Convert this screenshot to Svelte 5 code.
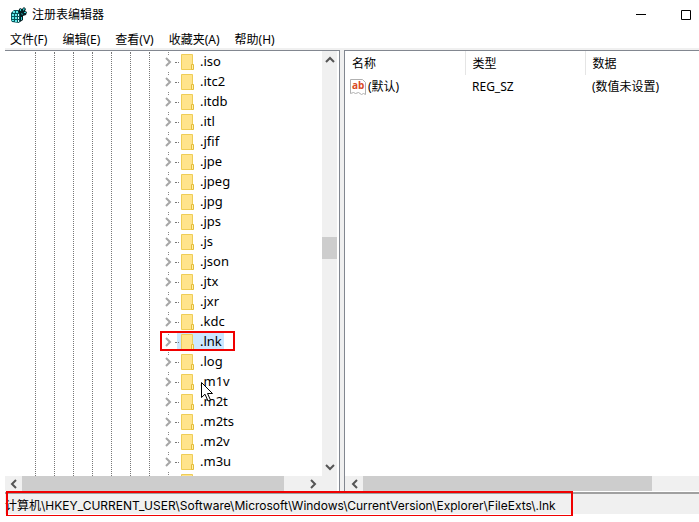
<script>
  const menus = ["文件(F)", "编辑(E)", "查看(V)", "收藏夹(A)", "帮助(H)"];

  const keys = [
    ".iso", ".itc2", ".itdb", ".itl", ".jfif", ".jpe", ".jpeg", ".jpg",
    ".jps", ".js", ".json", ".jtx", ".jxr", ".kdc", ".lnk", ".log",
    ".m1v", ".m2t", ".m2ts", ".m2v", ".m3u"
  ];

  // One guide for each ancestor level of the open branch
  const levels = [1, 2, 3, 4, 5, 6, 7];

  let selected = $state(".lnk");

  const arrows = {
    up: "M1 7 5 3 9 7",
    down: "M1 2 5 6 9 2",
    left: "M7 1 3 5 7 9",
    right: "M3 1 7 5 3 9"
  };
</script>

{#snippet arrow(dir, label)}
  <button class="arrow" aria-label={label}>
    <svg width="10" height="10" viewBox="0 0 10 10"><path d={arrows[dir]} /></svg>
  </button>
{/snippet}

{#snippet folder()}
  <svg width="13" height="16" viewBox="0 0 13 16">
    <path d="M.5.5h11v15H.5z" fill="#ffe48c" stroke="#efcd57" />
    <path d="M10.500 10.500h2v5h-2z" fill="#fff0ae" stroke="#e5bd39" />
  </svg>
{/snippet}

<div class="window">
  <header class="titlebar">
    <svg width="18" height="18" viewBox="0 0 18 18">
      <path d="M1 7 4 4 8 4 11 7 12 13 9 17 2 16 1 14z" fill="#075459" />
      <path d="M3 5h2v2H3zM6 5h2v2H6zM2 8h2v2H2zM5 8h2v2H5zM2 11h2v2H2zM5 11h2v2H5zM2 14h2v1H2zM5 14h2v2H5z" fill="#5fe8e8" />
      <path d="M8 8h1v2H8zM8 11h1v2H8zM8 14h1v2H8z" fill="#dffcfc" />
      <path d="M8 5 10 2 12 3 14 1 16 3 15 5 17 6 16 9 13 10 13 14 10 16 10 8z" fill="#031f22" />
      <path d="M10 3h1v2h-1zM13 3l1-1 1 1-2 2zM14 6h2v1h-2zM11 7l2 1-1 1zM11 11h1v3h-1z" fill="#38cdd0" />
    </svg>
    <h1>注册表编辑器</h1>
    <button class="caption" aria-label="最小化">
      <svg width="12" height="12" viewBox="0 0 12 12"><path d="M1 5.500h10" /></svg>
    </button>
    <button class="caption" aria-label="最大化">
      <svg width="12" height="12" viewBox="0 0 12 12"><path d="M1.500 1.500h9v9h-9z" /></svg>
    </button>
  </header>

  <nav class="menubar">
    {#each menus as menu}
      <button>{menu}</button>
    {/each}
  </nav>

  <main>
    <section class="pane tree-pane">
      <div class="view">
        <div class="guides">
          {#each levels as level (level)}
            <i></i>
          {/each}
        </div>
        <ul class="tree">
          {#each keys as key (key)}
            <li>
              <svg class="toggle" width="8" height="10" viewBox="0 0 8 10"><path d="M1 1 5 5 1 9" /></svg>
              <i class="branch"></i>
              <button class="key" class:selected={selected === key} onclick={() => (selected = key)}>
                {@render folder()}
                <span>{key}</span>
              </button>
              {#if key === ".lnk"}
                <b class="mark"></b>
              {/if}
              {#if key === ".m1v"}
                <svg class="pointer" width="13" height="20" viewBox="0 0 13 20">
                  <path d="M.5.5v15l3.500-3.300 3 6.800 2.500-1-3-6.500h5z" fill="#fff" stroke="#000" />
                </svg>
              {/if}
            </li>
          {/each}
          <!-- next row, only the top of its folder is in view -->
          <li class="next">{@render folder()}</li>
        </ul>
      </div>
      <div class="vscroll">
        {@render arrow("up", "向上滚动")}
        <div class="track"><i class="thumb"></i></div>
        {@render arrow("down", "向下滚动")}
      </div>
      <div class="hscroll">
        {@render arrow("left", "向左滚动")}
        <div class="track"><i class="thumb"></i></div>
        {@render arrow("right", "向右滚动")}
      </div>
    </section>

    <section class="pane value-pane">
      <table>
        <thead>
          <tr><th>名称</th><th>类型</th><th>数据</th></tr>
        </thead>
        <tbody>
          <tr>
            <td>
              <span class="name">
                <svg width="16" height="16" viewBox="0 0 16 16">
                  <path d="M.5.500h12l3 3v12l-2-1-2 1-3-2-3 1-2-1-3 1z" fill="#fff" stroke="#b0b0b0" />
                  <text x="2" y="10">ab</text>
                </svg>
                (默认)
              </span>
            </td>
            <td>REG_SZ</td>
            <td>(数值未设置)</td>
          </tr>
        </tbody>
      </table>
      <div class="hscroll">
        {@render arrow("left", "向左滚动")}
        <div class="track"><i class="thumb"></i></div>
      </div>
    </section>
  </main>

  <footer>
    <span class="path">计算机\HKEY_CURRENT_USER\Software\Microsoft\Windows\CurrentVersion\Explorer\FileExts\.lnk</span>
  </footer>
</div>

<style>
  :global(body) {
    margin: 0;
    background: #fff;
  }

  .window {
    box-sizing: border-box;
    display: flex;
    flex-direction: column;
    height: 100vh;
    padding: 0 0 8px 5px;
    overflow: hidden;
    font: 13px/20px "Noto Sans", "Noto Sans CJK SC", sans-serif;
    color: #000;
  }

  button {
    padding: 0;
    border: 0;
    background: none;
    font: inherit;
    color: inherit;
  }

  svg {
    display: block;
    flex: none;
  }

  .titlebar {
    display: flex;
    align-items: center;
    height: 30px;
    padding-left: 5px;
  }

  h1 {
    flex: 1;
    margin: 0 0 0 4px;
    font-size: 12px;
    font-weight: 400;
  }

  .caption {
    display: grid;
    place-items: center;
    width: 45px;
    height: 28px;
  }

  .caption:last-child {
    margin-right: -9px;
  }

  .caption path {
    fill: none;
    stroke: #000;
  }

  .menubar {
    box-sizing: border-box;
    display: flex;
    gap: 15px;
    height: 20px;
    padding-left: 5px;
    border-bottom: 2px solid #f0f0f0;
    font-size: 12px;
  }

  .menubar button {
    height: 20px;
  }

  main {
    flex: 1;
    display: flex;
    gap: 4px;
    min-height: 0;
    background: #f0f0f0;
  }

  .pane {
    display: grid;
    min-height: 0;
    padding-bottom: 1px;
    border-top: 1px solid #828790;
    background: #fff;
  }

  .tree-pane {
    box-sizing: border-box;
    flex: 0 0 335px;
    grid-template: minmax(0, 1fr) 15px / minmax(0, 1fr) 15px;
    padding-right: 2px;
    border-right: 1px solid #828790;
  }

  .value-pane {
    flex: 1;
    grid-template: minmax(0, 1fr) 15px / minmax(0, 1fr);
    border-left: 1px solid #828790;
  }

  .view {
    display: flex;
    overflow: hidden;
    padding-top: 1px;
  }

  .guides {
    display: flex;
    gap: 18px;
    padding: 0 13px 0 30px;
  }

  .guides i {
    border-left: 1px dotted #777;
  }

  .tree {
    margin: 0;
    padding: 0;
    list-style: none;
  }

  li {
    position: relative;
    display: flex;
    align-items: center;
    height: 20px;
    background: linear-gradient(#888 1px, transparent 1px, transparent 2px, #888 2px, #888 3px, transparent 3px) 5px 0 / 1px 20px no-repeat;
  }

  .next {
    padding-left: 18px;
  }

  .toggle {
    margin-left: 2px;
  }

  .toggle path {
    fill: none;
    stroke: #a6a6a6;
    stroke-width: 2;
  }

  .branch {
    z-index: 1;
    width: 4px;
    margin: 0 -2px 0 2px;
    border-top: 1px dotted #777;
  }

  .key {
    display: flex;
    align-items: center;
    gap: 6px;
    height: 18px;
    padding-left: 4px;
  }

  .key span {
    padding: 0 2px 2px 0;
  }

  .selected {
    background: #cce8ff;
  }

  .mark {
    position: absolute;
    inset: -1px auto auto -3px;
    width: 71px;
    height: 16px;
    border: 2px solid #f00000;
  }

  .pointer {
    position: absolute;
    left: 38px;
    top: 10px;
    z-index: 1;
  }

  .vscroll,
  .hscroll {
    display: flex;
    background: #f0f0f0;
  }

  .vscroll {
    flex-direction: column;
  }

  .hscroll {
    grid-row: 2;
  }

  .tree-pane .hscroll {
    grid-column: 1 / -1;
    padding-right: 16px;
  }

  .value-pane .hscroll {
    padding-left: 1px;
  }

  .arrow {
    display: grid;
    place-items: center;
    width: 17px;
    height: 17px;
  }

  .vscroll .arrow {
    width: 15px;
  }

  .hscroll .arrow {
    height: 15px;
  }

  .arrow path {
    fill: none;
    stroke: #555;
    stroke-width: 2;
  }

  .track {
    flex: 1;
    display: flex;
  }

  .vscroll .track {
    flex-direction: column;
  }

  .thumb {
    background: #cdcdcd;
  }

  .vscroll .thumb {
    height: 22px;
    margin-top: 169px;
  }

  .hscroll .thumb {
    width: 93%;
  }

  .value-pane .thumb {
    width: 86%;
  }

  table {
    align-self: start;
    width: 100%;
    table-layout: fixed;
    border-collapse: collapse;
    font-size: 12px;
  }

  th,
  td {
    box-sizing: border-box;
    width: 120px;
    height: 24px;
    padding: 0 0 0 7px;
    font-weight: 400;
    text-align: left;
  }

  th:last-child,
  td:last-child {
    width: auto;
  }

  th {
    padding-top: 1px;
    border-right: 1px solid #e5e5e5;
  }

  th:last-child {
    border: 0;
  }

  .name {
    display: flex;
    align-items: center;
    gap: 2px;
    margin-left: -2px;
  }

  .name svg {
    overflow: visible;
  }

  .name text {
    font: bold 10px "Open Sans", sans-serif;
    fill: #d94a24;
  }

  footer {
    box-sizing: border-box;
    height: 22px;
    border-top: 2px solid #a0a0a0;
    background: #f0f0f0;
  }

  .path {
    position: relative;
    display: block;
    width: max-content;
    padding-right: 12px;
    font: 12px/24px Inter, "Noto Sans CJK SC", sans-serif;
    white-space: nowrap;
  }

  .path::after {
    content: "";
    position: absolute;
    inset: -3px -5px 2px 1px;
    border: 2px solid #f00000;
    border-bottom-width: 1px;
  }
</style>
